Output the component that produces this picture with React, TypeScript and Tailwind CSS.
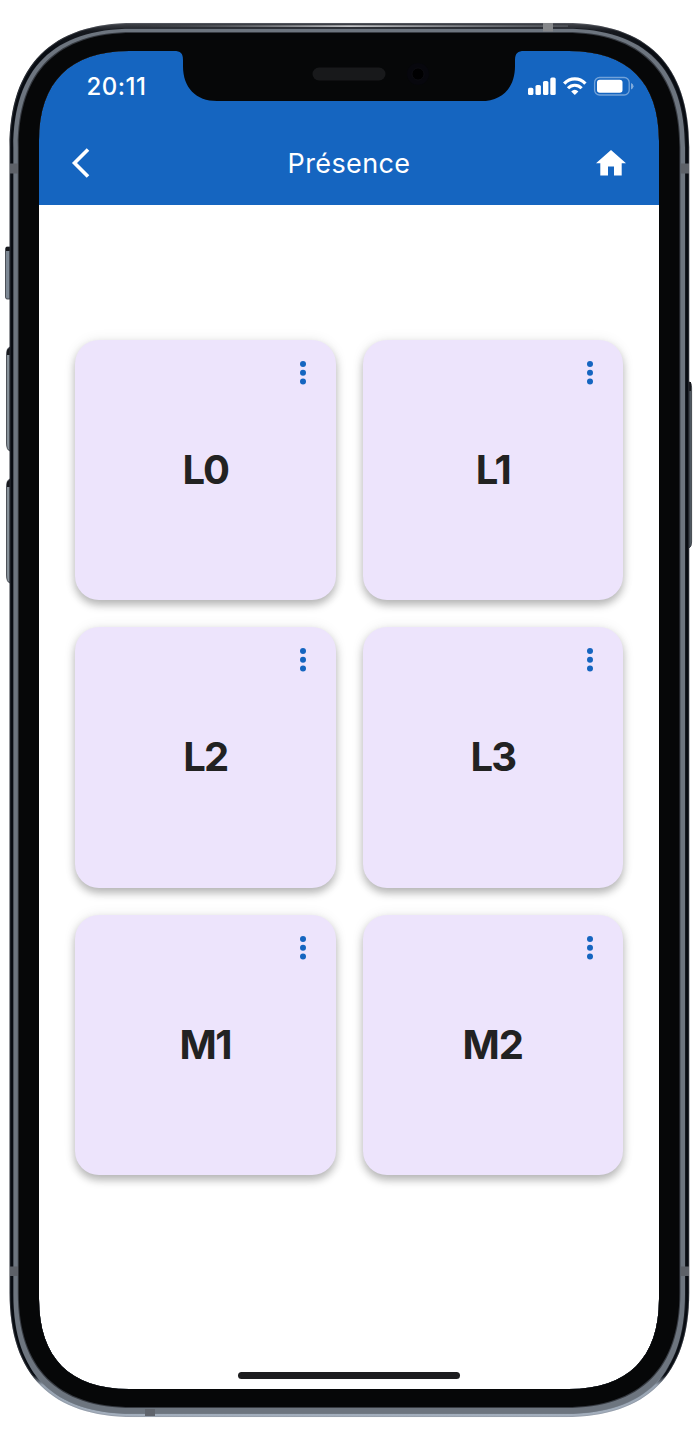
import React from "react";

const levels = [
  { name: "L0", spacing: "tracking-[-2px]" },
  { name: "L1", spacing: "tracking-[-2px]" },
  { name: "L2", spacing: "tracking-[-2px]" },
  { name: "L3", spacing: "tracking-[-2px]" },
  { name: "M1", spacing: "tracking-[-1.5px]" },
  { name: "M2", spacing: "tracking-[-1px]" },
];

function LevelCard({ name, spacing }: { name: string; spacing: string }) {
  return (
    <article className="grid h-[260.5px] grid-rows-[1fr_auto_1fr] rounded-[24px] bg-[#ede4fc] shadow-[0_5px_9px_rgba(0,0,0,0.27),0_0_14px_rgba(0,0,0,0.07)]">
      <button aria-label="Options" className="mt-5 mr-[29px] self-start justify-self-end">
        <svg viewBox="0 0 8 26" className="h-[26px] w-2" fill="#1565c0">
          <circle cx="4" cy="4" r="3" />
          <circle cx="4" cy="12.8" r="3" />
          <circle cx="4" cy="21.6" r="3" />
        </svg>
      </button>
      <h2 className={`text-center text-[40px] leading-none font-bold text-[#222222] ${spacing}`}>{name}</h2>
    </article>
  );
}

function StatusBar() {
  return (
    <div className="flex h-[70px] items-center justify-between pr-[24px] pl-[47.5px]">
      <span className="pt-0.5 text-[24px] leading-none font-medium tracking-[0.5px]">20:11</span>
      <svg viewBox="0 0 107 20" className="h-5 w-[107px]" fill="white">
        <rect x="0" y="11.8" width="5.4" height="7.2" rx="1.6" />
        <rect x="7.5" y="9" width="5.4" height="10" rx="1.6" />
        <rect x="15" y="5" width="5.4" height="14" rx="1.6" />
        <rect x="22.3" y="1.5" width="5.4" height="17.5" rx="1.6" />
        <g fill="none" stroke="white">
          <path d="M36.2 7.6C42.2 1.4 51.4 1.4 57.4 7.6" strokeWidth="3.3" />
          <path d="M40 12.2C43.8 8.2 49.8 8.2 53.6 12.2" strokeWidth="3.1" />
        </g>
        <path d="M43.2 15.5Q46.8 12.2 50.4 15.5L46.8 19Z" />
        <rect x="66.6" y="1.5" width="34.6" height="17.5" rx="5" fill="none" stroke="white" strokeOpacity=".4" strokeWidth="1.3" />
        <rect x="69" y="3.7" width="25.5" height="13.1" rx="2.8" />
        <path d="M103 7.1Q105.5 8.1 105.5 10.3T103 13.5Z" opacity=".45" />
      </svg>
    </div>
  );
}

/* Rounded rectangle with continuous-curvature corners. */
function shell(x: number, y: number, w: number, h: number, extent: number, handle: number) {
  const r = x + w;
  const b = y + h;
  return [
    `M${x + extent} ${y}H${r - extent}`,
    `C${r - handle} ${y} ${r} ${y + handle} ${r} ${y + extent}V${b - extent}`,
    `C${r} ${b - handle} ${r - handle} ${b} ${r - extent} ${b}H${x + extent}`,
    `C${x + handle} ${b} ${x} ${b - handle} ${x} ${b - extent}V${y + extent}`,
    `C${x} ${y + handle} ${x + handle} ${y} ${x + extent} ${y}Z`,
  ].join("");
}

function PhoneFrame() {
  const glass = shell(39, 51, 620, 1338, 90, 31);
  return (
    <svg viewBox="0 0 696 1440" className="pointer-events-none absolute inset-0 h-full w-full" fillRule="evenodd">
      <defs>
        <linearGradient id="rim" gradientUnits="userSpaceOnUse" x1="0" y1="23" x2="0" y2="1417">
          <stop offset="0" stopColor="#44474d" />
          <stop offset=".006" stopColor="#15181e" />
          <stop offset=".02" stopColor="#080c12" />
          <stop offset=".97" stopColor="#080c12" />
          <stop offset=".977" stopColor="#98a4b2" />
          <stop offset="1" stopColor="#a4afbd" />
        </linearGradient>
        <linearGradient id="edge" gradientUnits="userSpaceOnUse" x1="0" y1="28" x2="0" y2="1414">
          <stop offset="0" stopColor="#171a20" />
          <stop offset=".965" stopColor="#171a20" />
          <stop offset=".975" stopColor="#7f8a97" />
          <stop offset="1" stopColor="#7f8a97" />
        </linearGradient>
        <linearGradient id="shine" x1="0" x2="1">
          <stop offset="0" stopColor="#5a5d63" stopOpacity="0" />
          <stop offset=".5" stopColor="#c4c5c8" />
          <stop offset="1" stopColor="#777b82" stopOpacity=".4" />
        </linearGradient>
      </defs>

      <g stroke="#30343b" strokeWidth=".8">
        <path d="M10 247H7Q5.5 247 5.5 249V297Q5.5 299 7 299H10Z" fill="#7d8894" />
        <path d="M10 347Q6.5 348 6.5 355V443Q6.5 450 10 451Z" fill="#88929a" />
        <path d="M10 479Q6.5 480 6.5 487V575Q6.5 582 10 583Z" fill="#88929a" />
        <path d="M689 382Q691.6 382 691.6 388V542Q691.6 547 689 548Z" fill="#4f5860" />
      </g>
      <path d="M6 247H10V251H6ZM7 350L10 347V355H7ZM7 482L10 479V487H7ZM689 382H691V391H689Z" fill="#17191d" />

      <path d={shell(9.6, 23, 679.6, 1394, 124, 42) + glass} fill="url(#rim)" />
      <path d={shell(10, 23.4, 678.8, 1393.2, 124, 42)} fill="none" stroke="#7d828a" strokeOpacity=".4" strokeWidth=".8" />
      <path d={shell(13, 28, 673, 1386, 120, 40.5) + glass} fill="url(#edge)" />
      <path d={shell(13.4, 28.8, 671.6, 1385, 119, 40) + glass} fill="#6d757f" />
      <path d="M130 25.3H568V27H130Z" fill="url(#shine)" />
      <path d={shell(17.8, 32, 662.6, 1376, 115, 39) + glass} fill="#363a41" />
      <path d={shell(18.8, 33, 660.6, 1374, 114, 39) + glass} fill="#060708" />
      <path d="M10 163.5H18V173.5H10ZM681 163.5H689V173.5H681ZM10 1266.5H18V1276H10ZM681 1266.5H689V1276H681Z" fill="#5d6168" />
      <path d="M543 23H553V31.5H543Z" fill="#85878a" />
      <path d="M145 1409H155V1416H145Z" fill="#60656d" />

      <path d="M174 50V51C180.5 51 183 53 183 60V66C183 88 196 101 217 101H481C502 101 515 88 515 66V60C515 53 518 51 524 51V50Z" fill="#060708" />
      <rect x="312.5" y="67.5" width="73" height="13" rx="6.5" fill="#18191b" />
      <circle cx="418" cy="74" r="11" fill="#07070d" />
      <circle cx="418" cy="74" r="6" fill="#000001" stroke="#101016" strokeWidth=".7" />
    </svg>
  );
}

export default function App() {
  return (
    <div className="relative flex h-[1440px] w-[696px] overflow-hidden bg-white pt-[51px] pr-[37px] pb-[51px] pl-[39px] font-['Inter',sans-serif]">
      <div className="flex flex-1 flex-col overflow-hidden rounded-[70px] bg-white">
        <header className="h-[154px] shrink-0 bg-[#1565c0] text-white">
          <StatusBar />
          <div className="grid h-[84px] grid-cols-[64px_1fr_64px] items-center">
            <button aria-label="Retour" className="pl-[31px]">
              <svg viewBox="0 0 20 30" className="h-[30px] w-5" fill="none" stroke="white" strokeWidth="3.6">
                <path d="M18 1.5L4.5 15L18 28.5" />
              </svg>
            </button>
            <h1 className="text-center text-[27px] leading-none font-normal tracking-[0.4px]">Présence</h1>
            <button aria-label="Accueil" className="pl-px">
              <svg viewBox="0 0 30 26" className="h-[26px] w-[30px]" fill="white">
                <path d="M15 0L0 13.3H4.3V25.5H12V16.5H18V25.5H25.7V13.3H30Z" />
              </svg>
            </button>
          </div>
        </header>
        <main className="grid flex-1 grid-cols-2 content-start gap-[27px] px-9 pt-[134.5px]">
          {levels.map((level) => (
            <LevelCard key={level.name} {...level} />
          ))}
        </main>
        <div className="mb-[10px] h-[7.5px] w-[222px] self-center rounded-full bg-[#1d1d1f]" />
      </div>
      <PhoneFrame />
    </div>
  );
}
